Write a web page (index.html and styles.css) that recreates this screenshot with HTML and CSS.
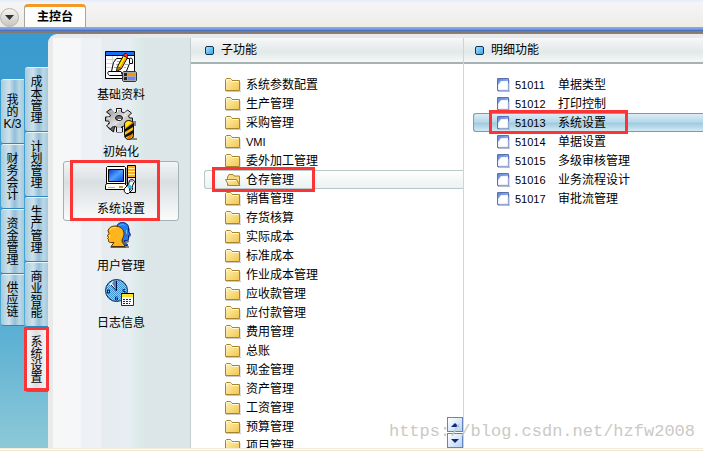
FILE: index.html
```html
<!DOCTYPE html>
<html lang="zh-CN">
<head>
    <meta charset="utf-8">
    <title>主控台</title>
    <link rel="stylesheet" href="styles.css">
</head>
<body>
    <svg class="sprite" width="0" height="0">
        <defs>
            <linearGradient id="gold" x1="0" y1="0" x2="1" y2="1">
                <stop offset="0" stop-color="#fff2b4"/>
                <stop offset="1" stop-color="#f2c64e"/>
            </linearGradient>
            <linearGradient id="screen" x1="0" y1="0" x2="1" y2="1">
                <stop offset="0" stop-color="#0038d0"/>
                <stop offset="0.5" stop-color="#4fa0ff"/>
                <stop offset="1" stop-color="#0048e0"/>
            </linearGradient>
            <linearGradient id="corner" x1="0" y1="0" x2="1" y2="1">
                <stop offset="0" stop-color="#5a86d8"/>
                <stop offset="1" stop-color="#a9c6f4"/>
            </linearGradient>
            <linearGradient id="steel" x1="0" y1="0" x2="1" y2="1">
                <stop offset="0" stop-color="#8e8e8e"/>
                <stop offset="0.5" stop-color="#d9d9d9"/>
                <stop offset="1" stop-color="#a2a2a2"/>
            </linearGradient>
            <pattern id="dots" width="2" height="2" patternUnits="userSpaceOnUse">
                <rect width="2" height="2" fill="#9acdf0"/>
                <path d="M0 0h1v1H0zM1 1h1v1H1z" fill="#3f93d0"/>
            </pattern>
        </defs>
        <symbol id="folder" viewBox="0 0 16 14">
            <path d="M1 13.5h15V4" fill="none" stroke="#c9c9c9"/>
            <path d="M.5 12.500V1.500l1-1h4l1.500 2h7.500v10z" fill="url(#gold)" stroke="#a8842f"/>
            <path d="M1.500 4V2l1-.5h3L7 3.500h6.500" fill="none" stroke="#fff9d8"/>
        </symbol>
        <symbol id="folder-open" viewBox="0 0 16 14">
            <path d="M2.500 12.500V4l1.500-2.500h4l1 1.500h5.500v9.500z" fill="#f7db84" stroke="#a8842f"/>
            <path d="M.5 6.500h11l3.500 6H3.500z" fill="url(#gold)" stroke="#a8842f"/>
            <path d="M2 7.500h9" stroke="#fff9d8"/>
        </symbol>
        <symbol id="doc" viewBox="0 0 13 14">
            <path d="M1 13.500h12V2" fill="none" stroke="#b5b9cc"/>
            <path d="M.5.5h11v12H.5z" fill="#eef3fd" stroke="#5c70b0"/>
            <path d="M1 1h10v2L4 3 1 7z" fill="url(#corner)"/>
            <path d="M4 4h7v8H2V7z" fill="#fff"/>
            <path d="M2 12h9V5" fill="none" stroke="#d0dcf5"/>
        </symbol>
    </svg>

    <header class="topbar">
        <button class="round-btn" aria-label="菜单">
            <svg width="9" height="5" viewBox="0 0 9 5"><path d="M0 0h9L4.500 5z" fill="#333"/></svg>
        </button>
        <button class="main-tab">主控台</button>
    </header>

    <main class="main">
        <nav class="side">
            <div class="side-col">
                <button class="vtab"><span>我的K/3</span></button>
                <button class="vtab"><span>财务会计</span></button>
                <button class="vtab"><span>资金管理</span></button>
                <button class="vtab short"><span>供应链</span></button>
            </div>
            <div class="side-col second">
                <button class="vtab"><span>成本管理</span></button>
                <button class="vtab"><span>计划管理</span></button>
                <button class="vtab"><span>生产管理</span></button>
                <button class="vtab"><span>商业智能</span></button>
                <button class="vtab active marked"><span>系统设置</span></button>
            </div>
        </nav>

        <div class="panel">
            <nav class="modules">
                <button class="module">
                    <svg width="32" height="32" viewBox="0 0 32 32">
                        <path d="M.5.5h29v27H.5z" fill="#fff" stroke="#000"/>
                        <path d="M1 1h28v3H1z" fill="#1672f0"/>
                        <path d="M1 4.500h28" stroke="#000"/>
                        <path d="M1 8.500h10M1 12.500h7M1 16.500h6M12.500 5v4M7.500 5v14" stroke="#d8d8d8"/>
                        <path d="M8.500 11.500l3-4h13c2-1 3 0 3 2v3h-3l-4 10c-1 2 0 2-1 2h-15c-2-1-2-3-1-4h3z" fill="#fff" stroke="#000"/>
                        <path d="M5 20.500h11c1 0 0 3 2 4M24.500 8v4" fill="none" stroke="#000"/>
                        <path d="M12 10.500h4M11 13.500h4M9 16.500h3M20 13.500h3M19 16.500h2" stroke="#a8a8a8"/>
                        <path d="M11.500 20.500l1-5 6-11 4 2-6 11z" fill="#ffee00" stroke="#000"/>
                        <path d="M15.500 16.500l5-9" stroke="#f89800" stroke-width="1.500"/>
                        <path d="M18.500 4.500l1-2h2l1 1v2l-1 1z" fill="#f03030" stroke="#700"/>
                        <path d="M11.500 20.500l1-5 4 2z" fill="#d07818" stroke="#000" stroke-width=".5"/>
                        <path d="M18.500 20.500h12l1 1v8l-1 1h-12l-1-1v-8z" fill="#a8a8a8" stroke="#303038"/>
                        <path d="M19 22h3v3h-3zM19 26h3v3h-3z" fill="#222"/>
                        <path d="M23 22h7v3h-7z" fill="#f09808"/>
                        <path d="M23 26h7v3h-7z" fill="#7080ff"/>
                    </svg>
                    <span>基础资料</span>
                </button>
                <button class="module">
                    <svg width="32" height="32" viewBox="0 0 32 32">
                        <!-- gear: teeth, outline, body, hub -->
                        <path d="M3.500 15v5l5 4 1-5M11.500 18v6h6v-6M20 16l3 4 3-3v-4" fill="#686868" stroke="#111"/>
                        <path d="M11.500 4V.5h5V4l3 1 3-3 4 3-3 3 1 2h3v4h-4l-1 2 3 2-4 3-3-3-2 1v2h-5v-2l-3-1-3 3-4-3 3-3-1-2h-3V9h4l1-2-4-3 4-3 4 4z" fill="url(#steel)" stroke="#111"/>
                        <path d="M6 3.500l1-1 3 3M12.500 4V1.500h3M2 10h3M19 6.500l3-3" fill="none" stroke="#fff"/>
                        <path d="M8 18L21 7" stroke="#f2f2f2"/>
                        <ellipse cx="14" cy="10" rx="3.500" ry="2.500" fill="#707070" stroke="#111"/>
                        <path d="M13 11.500h3" stroke="#fff"/>
                        <path d="M12 20h5v4h-5z" fill="#e4e4f2"/>
                        <path d="M28 13h3v5h-2v12h3v2h-8z" fill="#858585"/>
                        <path d="M19.500 15.500c1-4 7-4 9 0v12c0 2-3 4-5 4s-4-2-4-4z" fill="#ffc400" stroke="#111"/>
                        <path d="M20 24v-3l8-6v4zM20 29.500v-2.500l8-5v4z" fill="#111"/>
                        <path d="M20 20l8-6v1l-8 6zM22 30l6-5v2l-4 4z" fill="#f06a00"/>
                        <path d="M21 16c1-3 4-3 5-1l-5 4z" fill="#fff200"/>
                    </svg>
                    <span>初始化</span>
                </button>
                <button class="module active marked">
                    <svg width="32" height="32" viewBox="0 0 32 32">
                        <path d="M22.500.5h8v27h-8z" fill="#e8e8ee" stroke="#000"/>
                        <path d="M23 1h7v11h-7z" fill="#ffad1c"/>
                        <path d="M23 3.500h7M23 6.500h7M23 9.500h7" stroke="#fff0a0"/>
                        <path d="M23 12.500h8" stroke="#000"/>
                        <path d="M20 3h2v16h-2z" fill="#999"/>
                        <path d="M2.500 1.500h17l1 1v17h-18l-1-1v-16z" fill="#fff" stroke="#000"/>
                        <path d="M3.500 4.500h15v12h-15z" fill="url(#screen)" stroke="#000"/>
                        <path d="M1.500 18.500h18l2 2v4h-21v-4z" fill="#fffdf0" stroke="#000"/>
                        <path d="M3 22.500h7" stroke="#c7b66a"/>
                        <path d="M14 21h4v2h-4z" fill="#c09050"/>
                        <path d="M19.500 23.500l4-4 1-4c2-2 4-1 5 1l-2 4v4l-4 4h-2c-2-1-3-3-2-5z" fill="#fff" stroke="#000"/>
                        <path d="M24 19l4 3-2 3-4-3z" fill="#2cc0f0"/>
                        <path d="M25 15h3v2h-3z" fill="#a8a8b8"/>
                        <path d="M24 23l2 1-2 3z" fill="#183058"/>
                    </svg>
                    <span>系统设置</span>
                </button>
                <button class="module">
                    <svg width="32" height="32" viewBox="0 0 32 32">
                        <path d="M15 3h7l3 4v4l1 3-2 2v4l-3 2v2h3v2h-8z" fill="#858585"/>
                        <path d="M11.500 6c0-3 2-5.500 6-5.500 3 0 6 2 6 5v4l2 3-2 1v3c0 2-1 2-4 2v3l3 1v1h-9z" fill="#1d7ef4" stroke="#002080"/>
                        <path d="M14 4c2-2 5-2 6 0M21.500 8v4" fill="none" stroke="#66b5ff"/>
                        <path d="M5 25h16v1H6zM20 10l2 3-2 7h-2l3 4z" fill="#666"/>
                        <path d="M5.500 20.500c-2 0-2-1-2-3l-1-1 1-1-1-2 1.500-2-1-3c1-3 4-4.500 7-4.500 5 0 9 3 9 8 0 3-2 4-2 7 0 2 2 3 3 5.500h-14l3-4z" fill="#ffb51e" stroke="#513000"/>
                        <path d="M5 8c1-2 3-3 6-2M4.500 13v3" fill="none" stroke="#ffe06b"/>
                    </svg>
                    <span>用户管理</span>
                </button>
                <button class="module">
                    <svg width="32" height="32" viewBox="0 0 32 32">
                        <circle cx="11.500" cy="11.500" r="11" fill="url(#dots)" stroke="#102848"/>
                        <path d="M4 5l4-3 3 8z" fill="#e5f5ff"/>
                        <path d="M7 4l4-3v10z" fill="#6680a8"/>
                        <path d="M11.500 2v10L6 6" fill="none" stroke="#001050"/>
                        <path d="M2.500 11h2v3h-2zM20 10.500h-2v2h2v2h-2M12.500 18h-2v3h2v-2" fill="none" stroke="#10205c"/>
                        <path d="M16.500 14.500h12v12h-12z" fill="#fff" stroke="#102890"/>
                        <path d="M17 15h11v3H17z" fill="#ffe42c"/>
                        <path d="M16 14.500h13" stroke="#000"/>
                        <path d="M18 20.500h9M18 22.500h9M18 24.500h7" stroke="#202060" stroke-dasharray="2 1"/>
                        <path d="M24 22h2v1h-2z" fill="#f02020"/>
                    </svg>
                    <span>日志信息</span>
                </button>
            </nav>

            <section class="column sub">
                <h2>子功能</h2>
                <ul class="list">
                    <li><button class="row"><svg class="folder"><use href="#folder"/></svg>系统参数配置</button></li>
                    <li><button class="row"><svg class="folder"><use href="#folder"/></svg>生产管理</button></li>
                    <li><button class="row"><svg class="folder"><use href="#folder"/></svg>采购管理</button></li>
                    <li><button class="row"><svg class="folder"><use href="#folder"/></svg><span class="latin">VMI</span></button></li>
                    <li><button class="row"><svg class="folder"><use href="#folder"/></svg>委外加工管理</button></li>
                    <li><button class="row active marked"><svg class="folder"><use href="#folder-open"/></svg>仓存管理</button></li>
                    <li><button class="row"><svg class="folder"><use href="#folder"/></svg>销售管理</button></li>
                    <li><button class="row"><svg class="folder"><use href="#folder"/></svg>存货核算</button></li>
                    <li><button class="row"><svg class="folder"><use href="#folder"/></svg>实际成本</button></li>
                    <li><button class="row"><svg class="folder"><use href="#folder"/></svg>标准成本</button></li>
                    <li><button class="row"><svg class="folder"><use href="#folder"/></svg>作业成本管理</button></li>
                    <li><button class="row"><svg class="folder"><use href="#folder"/></svg>应收款管理</button></li>
                    <li><button class="row"><svg class="folder"><use href="#folder"/></svg>应付款管理</button></li>
                    <li><button class="row"><svg class="folder"><use href="#folder"/></svg>费用管理</button></li>
                    <li><button class="row"><svg class="folder"><use href="#folder"/></svg>总账</button></li>
                    <li><button class="row"><svg class="folder"><use href="#folder"/></svg>现金管理</button></li>
                    <li><button class="row"><svg class="folder"><use href="#folder"/></svg>资产管理</button></li>
                    <li><button class="row"><svg class="folder"><use href="#folder"/></svg>工资管理</button></li>
                    <li><button class="row"><svg class="folder"><use href="#folder"/></svg>预算管理</button></li>
                    <li><button class="row"><svg class="folder"><use href="#folder"/></svg>项目管理</button></li>
                </ul>
                <div class="scroll">
                    <button aria-label="向上"><svg width="8" height="4" viewBox="0 0 8 4"><path d="M0 4h8L4 0z" fill="#0a2a7c"/></svg></button>
                    <button aria-label="向下"><svg width="8" height="4" viewBox="0 0 8 4"><path d="M0 0h8L4 4z" fill="#0a2a7c"/></svg></button>
                </div>
            </section>

            <section class="column detail">
                <h2>明细功能</h2>
                <ul class="list">
                    <li><button class="row"><svg class="doc"><use href="#doc"/></svg><span class="code">51011</span>单据类型</button></li>
                    <li><button class="row"><svg class="doc"><use href="#doc"/></svg><span class="code">51012</span>打印控制</button></li>
                    <li><button class="row active marked"><svg class="doc"><use href="#doc"/></svg><span class="code">51013</span>系统设置</button></li>
                    <li><button class="row"><svg class="doc"><use href="#doc"/></svg><span class="code">51014</span>单据设置</button></li>
                    <li><button class="row"><svg class="doc"><use href="#doc"/></svg><span class="code">51015</span>多级审核管理</button></li>
                    <li><button class="row"><svg class="doc"><use href="#doc"/></svg><span class="code">51016</span>业务流程设计</button></li>
                    <li><button class="row"><svg class="doc"><use href="#doc"/></svg><span class="code">51017</span>审批流管理</button></li>
                </ul>
            </section>
        </div>
        <div class="watermark">https://blog.csdn.net/hzfw2008</div>
    </main>
    <footer class="bottom"></footer>
</body>
</html>
```

FILE: styles.css
```css
*,
*::before,
*::after {
    box-sizing: border-box;
}

body {
    margin: 0;
    height: 100vh;
    display: flex;
    flex-direction: column;
    overflow: hidden;
    background: #fff;
    color: #000;
    font: 12px/16px "Liberation Sans", "Noto Sans CJK SC", sans-serif;
}

button {
    font: inherit;
    color: inherit;
    margin: 0;
    padding: 0;
    border: 0;
    background: none;
}

.sprite {
    position: absolute;
}

/* top bar */
.topbar {
    flex: none;
    display: flex;
    align-items: flex-end;
    gap: 5px;
    height: 33px;
    border-bottom: 2px solid #86796f;
    background: linear-gradient(#e3ecfa 0, #f6f5f5 3px, #eeece7 27px, #88ace9 27px, #7aa0e4 29px, #3c62b4 31px);
    padding-bottom: 4px;
}

.round-btn {
    display: flex;
    align-items: center;
    justify-content: center;
    width: 19px;
    height: 19px;
    border: 1px solid #b9b6b1;
    border-radius: 50%;
    background: linear-gradient(#f5f4f2, #c9c6c1);
}

.main-tab {
    width: 62px;
    height: 23px;
    border: 1px solid #aaa69e;
    border-top: 3px solid #f39a26;
    border-bottom: 0;
    border-radius: 4px 4px 0 0;
    background: linear-gradient(#fff, #fbfbfa);
    font-weight: bold;
}

/* left vertical tabs */
.main {
    position: relative;
    flex: 1;
    min-height: 0;
    display: flex;
    background: linear-gradient(#399acf, #46a5d2 60%, #8dc9d7);
}

.side {
    flex: none;
    display: flex;
    gap: 1px;
    padding-left: 1px;
}

.side-col {
    width: 23px;
    padding-top: 46px;
}

.side-col.second {
    padding-top: 34px;
}

.vtab {
    position: relative;
    display: flex;
    align-items: center;
    justify-content: center;
    width: 100%;
    height: 65px;
    border-top: 1px solid #eaf4f9;
    border-bottom: 1px solid #2b87bd;
    border-radius: 3px 0 0 3px;
    background: linear-gradient(90deg, #a5cbdd, #cfe2ec 35%, #93bfd7 60%, #bcd8e5 80%, #a4cade);
    line-height: 12px;
}

.vtab.short {
    height: 52px;
}

.vtab span {
    width: 20px;
}

.vtab.active {
    background: linear-gradient(90deg, #fff, #dcdce2 50%, #f8f8f8);
}

/* main panel */
.panel {
    flex: 1;
    min-width: 0;
    display: flex;
    border: 4px solid #e9eaec;
    border-width: 4px 0 0 5px;
    border-top-left-radius: 9px;
    margin-top: 1px;
    background: #fff;
}

.modules {
    flex: none;
    width: 138px;
    padding: 9px 11px 0 10px;
    border-right: 1px solid #c2cecf;
    background: linear-gradient(90deg, #f7f7f7 0, #f5f6f7 20%, #edf1f6 21%, #edf2f5 35%, #e5ebee 36%, #e7eef3 55%, #dcebeb 62%, #dce5e7 68%, #dce5e7);
}

.module {
    position: relative;
    display: flex;
    flex-direction: column;
    align-items: center;
    width: 100%;
    height: 60px;
    padding-top: 3px;
    border: 1px solid transparent;
    border-radius: 3px;
}

.module + .module {
    margin-top: -3px;
}

.module svg {
    margin-bottom: 4px;
}

.module.active {
    border-color: #9fb3b2;
    background: linear-gradient(#f3f5f6, #d9dfe1 35%, #e4e8ea 55%, #fafbfb);
}

/* function columns */
.column {
    position: relative;
    min-width: 0;
    overflow: hidden;
}

.sub {
    flex: none;
    width: 273px;
    border-right: 1px solid #d0d4d6;
}

.detail {
    flex: 1;
}

.column h2 {
    display: flex;
    align-items: center;
    gap: 7px;
    height: 26px;
    margin: 0 0 11px;
    padding-left: 14px;
    border-bottom: 2px solid #a7b3b3;
    background: linear-gradient(#f8f9f9, #e7ecec 40%, #e2e9e9 60%, #f6f8f8);
    font-size: 12px;
    font-weight: normal;
}

.column.detail h2 {
    padding-left: 11px;
}

.column h2::before {
    content: "";
    width: 9px;
    height: 9px;
    border: 1px solid #15324a;
    border-radius: 2px;
    background: linear-gradient(135deg, #a5dcff, #38a8ee);
}

.list {
    list-style: none;
    margin: 0;
    padding: 0 0 0 13px;
}

.detail .list {
    padding-left: 9px;
}

.row {
    position: relative;
    display: flex;
    align-items: center;
    width: 100%;
    height: 19px;
    padding-left: 20px;
    border: 1px solid transparent;
    border-right: 0;
    border-radius: 3px 0 0 3px;
    white-space: nowrap;
}

.detail .row {
    padding-left: 23px;
}

.folder {
    width: 16px;
    height: 14px;
    margin-right: 5px;
}

.doc {
    width: 13px;
    height: 14px;
    margin-right: 5px;
}

.latin,
.code {
    font-size: 11px;
}

.code {
    width: 43px;
    text-align: left;
}

.sub .row.active {
    border-color: #b8c8c8;
    background: linear-gradient(#fff, #edf1f1);
}

.detail .row.active {
    border-color: #6fa0b8;
    background: linear-gradient(#dcecf5, #b8d9e9 45%, #9fcbe1 55%, #d3e9f3);
}

/* red frames */
.marked::after {
    content: "";
    position: absolute;
    border: 3px solid #fb3535;
}

.vtab.marked::after {
    inset: -1px -1px 0 -1px;
}

.module.marked::after {
    inset: -2px 18px -1px 6px;
}

.sub .marked::after {
    inset: -4px auto -4px 7px;
    width: 103px;
}

.detail .marked::after {
    inset: -4px auto -3px 15px;
    width: 139px;
}

.scroll {
    position: absolute;
    right: 0;
    bottom: 0;
    display: flex;
    flex-direction: column;
    gap: 1px;
}

.scroll button {
    display: flex;
    align-items: center;
    justify-content: center;
    width: 16px;
    height: 15px;
    border: 1px solid #6484c0;
    background: linear-gradient(135deg, #fff, #b8d2f4);
}

.watermark {
    position: absolute;
    right: 8px;
    bottom: 6px;
    color: #c9cac5;
    font: 17px/20px "Liberation Mono", monospace;
    pointer-events: none;
}

.bottom {
    flex: none;
    height: 3px;
    border-top: 1px solid #f3e8dc;
    border-bottom: 1px solid #efe4cf;
    background: #fff;
}
```
